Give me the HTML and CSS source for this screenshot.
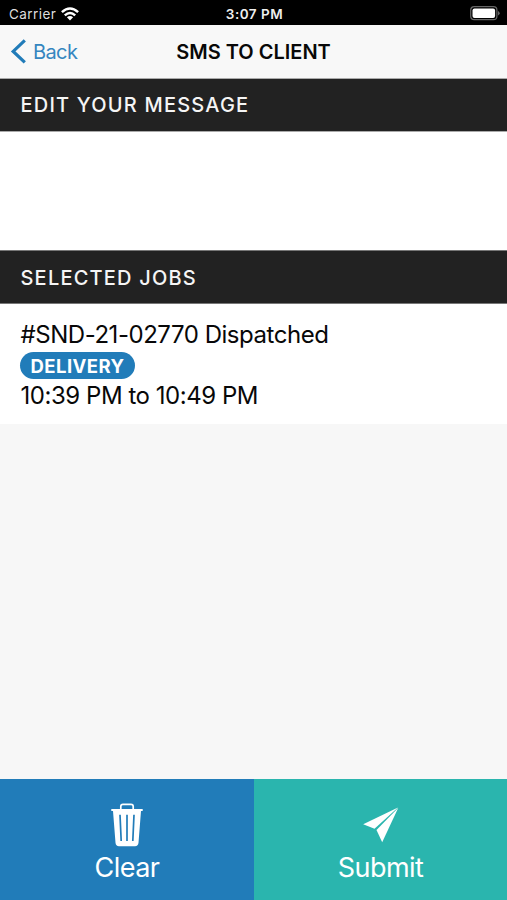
FILE: index.html
```html
<!DOCTYPE html>
<html lang="en">
<head>
<meta charset="utf-8">
<title>SMS to Client</title>
<link rel="stylesheet" href="styles.css">
</head>
<body>
<div class="status">
  <div class="carrier"><span class="carrier-name">Carrier</span>
    <svg class="wifi" width="18" height="14" viewBox="0 0 18 14" fill="none" stroke="#fff" stroke-width="2.5"><path d="M.9 5.2Q9-2.2 17.1 5.2M3.8 8.4Q9 3.7 14.2 8.4"/><path d="M5.9 10.3Q9 7.8 12.1 10.3L9 13.6Z" fill="#fff" stroke="none"/></svg>
  </div>
  <span class="time">3:07 PM</span>
  <svg class="battery" width="30" height="15" viewBox="0 0 30 15"><rect x=".7" y=".7" width="26.2" height="13" rx="3.5" fill="#000" stroke="#666" stroke-width="1.2"/><rect x="2.5" y="2.4" width="22.6" height="9.6" rx="2" fill="#fff"/><path d="M28 5v4.5q1.7-.7 1.7-2.2T28 5" fill="#666"/></svg>
</div>
<header class="nav">
  <a class="back"><svg width="16" height="26" viewBox="0 0 16 26" fill="none" stroke="#217cb9" stroke-width="3.2"><path d="M14.8 1.4 3.2 12.4 14.8 23.4"/></svg><span class="back-label">Back</span></a>
  <h1 class="title">SMS TO CLIENT</h1>
</header>
<h2 class="section edit"><span class="edit-label">EDIT YOUR MESSAGE</span></h2>
<div class="message"></div>
<h2 class="section selected"><span class="selected-label">SELECTED JOBS</span></h2>
<section class="job">
  <div class="row"><span class="job-name">#SND-21-02770 Dispatched</span></div>
  <div class="badge"><span class="badge-label">DELIVERY</span></div>
  <div class="row"><span class="job-time">10:39 PM to 10:49 PM</span></div>
</section>
<main class="empty"></main>
<footer class="actions">
  <div class="action clear">
    <svg width="34" height="44" viewBox="0 0 34 44"><path d="M10.8 6V3.6Q10.8 1.4 13 1.4H21Q23.2 1.4 23.2 3.6V6" fill="none" stroke="#fff" stroke-width="1.7"/><path d="M1.3 6H32.7V8.1H31L28.5 39.8Q28.2 43.2 25 43.2H9Q5.8 43.2 5.5 39.8L3 8.1H1.3Z" fill="#fff"/><path d="M10 11.7 11.2 38M17 11.7V38M24 11.7 22.8 38" stroke="#217cb9" stroke-width="1.7" fill="none"/></svg>
    <span class="clear-label">Clear</span>
  </div>
  <div class="action submit">
    <svg width="36" height="44" viewBox="0 0 36 44" fill="#fff"><path d="M35 4.5 .2 21.3 11.5 25.8Z"/><path d="M35.3 4.8 13.5 27 19.2 39.3Z"/></svg>
    <span class="submit-label">Submit</span>
  </div>
</footer>
</body>
</html>
```
FILE: styles.css
```css
* { box-sizing: border-box; }
body { margin: 0; height: 900px; display: flex; flex-direction: column; background: #f7f7f7; color: #080808; font-family: Inter, "Liberation Sans", sans-serif; overflow: hidden; }
span { white-space: nowrap; }
.status { height: 25px; flex: none; background: #000; color: #fff; display: grid; grid-template-columns: 1fr auto 1fr; align-items: center; padding: 2px 7px 0 9px; }
.carrier { display: flex; align-items: center; gap: 5px; color: #ddd; font-size: 13.5px; letter-spacing: .45px; }
.time { font-weight: 600; color: #eee; font-size: 13.5px; letter-spacing: .5px; }
.battery { justify-self: end; }
.nav { height: 54px; flex: none; background: #f8f8f8; border-bottom: 1px solid #aaa; display: grid; grid-template-columns: 1fr auto 1fr; align-items: center; padding: 0 10px; }
.back { display: flex; align-items: center; gap: 7px; color: #3586c0; font-size: 20px; letter-spacing: -.6px; }
.title { margin: 0; font-size: 20px; font-weight: 600; line-height: 24px; white-space: nowrap; }
.section { margin: 0; flex: none; background: #222; color: #f5f5f5; font-size: 20px; font-weight: 450; padding-left: 20.5px; display: flex; align-items: center; letter-spacing: 1.2px; }
.edit { height: 53px; border-bottom: 1px solid #aaa; }
.message { height: 118px; flex: none; background: #fff; }
.selected { height: 54px; border-top: 1px solid #777; border-bottom: 1px solid #777; padding-top: 2px; }
.job { height: 120px; flex: none; background: #fff; padding: 15px 20px 0 20.5px; font-size: 24px; letter-spacing: -.46px; }
.row { height: 32px; line-height: 32px; }
.badge { width: 115px; height: 27px; margin: 1px 0 1px -.5px; border-radius: 14px; background: #217cb9; color: #fff; font-size: 18.5px; font-weight: 700; letter-spacing: .45px; display: flex; align-items: center; justify-content: center; padding-top: 1px; }
.empty { flex: 1; }
.actions { height: 121px; flex: none; display: grid; grid-template-columns: 254px 253px; color: #fff; font-size: 27px; letter-spacing: -.55px; }
.action { display: flex; flex-direction: column; align-items: center; padding-top: 24px; line-height: 42px; }
.clear { background: #217cb9; }
.submit { background: #2ab5ae; }
```
